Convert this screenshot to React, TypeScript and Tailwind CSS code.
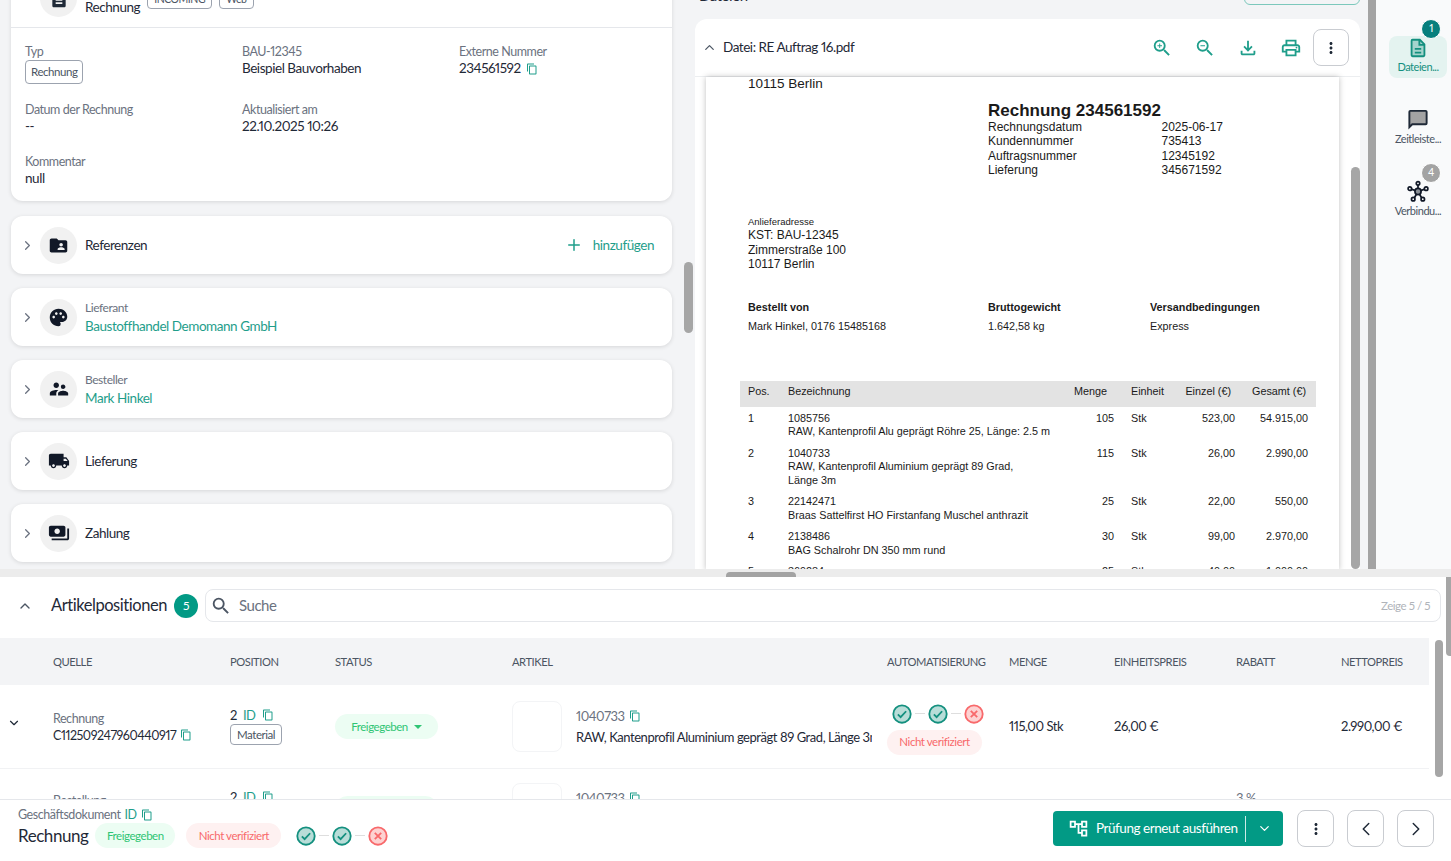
import type { ReactNode } from "react";
import { ChevronDown, ChevronLeft, ChevronRight, ChevronUp, Plus } from "lucide-react";
import {
  MdDescription,
  MdFolderShared,
  MdLocalShipping,
  MdMoreVert,
  MdOutlineAccountTree,
  MdOutlineContentCopy,
  MdOutlineFileDownload,
  MdOutlinePrint,
  MdPalette,
  MdPayments,
  MdSearch,
  MdSupervisorAccount,
  MdZoomIn,
  MdZoomOut,
} from "react-icons/md";

const sans = "font-['Lato','Noto_Sans',sans-serif]";

function Copy({ size = 12 }: { size?: number }) {
  return <MdOutlineContentCopy size={size} className="inline-block shrink-0 text-[#1f9e8b]" />;
}

function CheckCircle() {
  return (
    <svg width="22" height="22" viewBox="0 0 24 24" fill="none" className="text-[#14907f]">
      <circle cx="12" cy="12" r="9.5" fill="currentColor" opacity="0.3" />
      <circle cx="12" cy="12" r="9.5" stroke="currentColor" strokeWidth="2" />
      <path d="M7.5 12.5l3 3 6-6.5" stroke="currentColor" strokeWidth="2" />
    </svg>
  );
}

function CancelCircle() {
  return (
    <svg width="22" height="22" viewBox="0 0 24 24" fill="none" className="text-[#f8696b]">
      <circle cx="12" cy="12" r="9.5" fill="currentColor" opacity="0.3" />
      <circle cx="12" cy="12" r="9.5" stroke="currentColor" strokeWidth="2" />
      <path d="M8.5 8.5l7 7M15.5 8.5l-7 7" stroke="currentColor" strokeWidth="2" />
    </svg>
  );
}

function DocIcon() {
  return (
    <svg width="22" height="22" viewBox="0 0 24 24" fill="none" stroke="currentColor" strokeWidth="2">
      <path d="M14 3H6a1 1 0 0 0-1 1v16a1 1 0 0 0 1 1h12a1 1 0 0 0 1-1V8z" fill="currentColor" fillOpacity="0.3" />
      <path d="M13.5 3v5.5H19M8.5 13h7M8.5 17h7" />
    </svg>
  );
}

function ChatIcon() {
  return (
    <svg width="24" height="24" viewBox="0 0 24 24" fill="none" stroke="#1f2937" strokeWidth="2">
      <path d="M4 3h16a1 1 0 0 1 1 1v12a1 1 0 0 1-1 1H6l-3 3V4a1 1 0 0 1 1-1z" fill="#a3a3a3" />
    </svg>
  );
}

function HubIcon() {
  return (
    <svg width="24" height="24" viewBox="0 0 24 24" fill="none" stroke="#111827" strokeWidth="1.8">
      <path d="M12 12V5M12 12l-7-2.5M12 12l7-2.5M12 12l-4 7M12 12l4 7" />
      <circle cx="12" cy="12" r="3.2" fill="#8a8f96" />
      <circle cx="12" cy="3.5" r="1.8" fill="white" />
      <circle cx="3.5" cy="9" r="1.8" fill="white" />
      <circle cx="20.5" cy="9" r="1.8" fill="white" />
      <circle cx="7" cy="20" r="1.8" fill="white" />
      <circle cx="17" cy="20" r="1.8" fill="white" />
    </svg>
  );
}

function Field({ label, children }: { label: string; children: ReactNode }) {
  return (
    <div className="leading-[17px]">
      <p className="text-[12.5px] text-[#6b7280]">{label}</p>
      <div className="text-[13.5px] text-[#1f2937]">{children}</div>
    </div>
  );
}

function Card({ icon, children, action }: { icon: ReactNode; children: ReactNode; action?: ReactNode }) {
  return (
    <div className="flex h-[58px] items-center rounded-xl bg-white pl-[9px] pr-[18px] shadow-[0_1px_4px_rgba(0,0,0,0.12)]">
      <ChevronRight size={15} className="text-[#6b7280]" />
      <div className="ml-[5px] flex h-[37px] w-[37px] items-center justify-center rounded-full bg-[#f1f1f1] text-[#111827]">
        {icon}
      </div>
      <div className="-mt-[1px] ml-2 flex-1 leading-[18px]">{children}</div>
      {action}
    </div>
  );
}

function Pill({ tone, children, className = "" }: { tone: "green" | "red"; children: ReactNode; className?: string }) {
  const cls = tone === "green" ? "bg-[#ecfdf3] text-[#2fc574]" : "bg-[#fef1f1] text-[#f8696b]";
  return (
    <span className={`inline-flex h-[25px] items-center justify-center rounded-full text-[11.5px] ${cls} ${className}`}>
      {children}
    </span>
  );
}

function Steps({ className }: { className: string }) {
  return (
    <div className={`flex items-center ${className}`}>
      <CheckCircle />
      <span className="mx-[2px] h-px w-[10px] bg-[#dedede]" />
      <CheckCircle />
      <span className="mx-[2px] h-px w-[10px] bg-[#dedede]" />
      <CancelCircle />
    </div>
  );
}

function RailItem({ icon, label, badge, active }: { icon: ReactNode; label: string; badge?: string; active?: boolean }) {
  return (
    <div
      className={`relative flex h-[42px] w-[58px] flex-col items-center justify-center rounded-lg pb-[5px] ${
        active ? "bg-[#e4f3f0] text-[#14907f]" : "text-[#4b5563]"
      }`}
    >
      {badge && (
        <span
          className={`absolute right-[6px] top-[-17px] flex h-5 w-5 items-center justify-center rounded-full border border-white text-[10.5px] text-white ${
            active ? "bg-[#067f7d]" : "bg-[#a3a3a3]"
          }`}
        >
          {badge}
        </span>
      )}
      {icon}
      <span className="mt-[1px] text-[11px] leading-[13px]">{label}</span>
    </div>
  );
}

const invoiceRows = [
  { pos: "1", lines: ["1085756", "RAW, Kantenprofil Alu geprägt Röhre 25, Länge: 2.5 m"], qty: "105", single: "523,00", total: "54.915,00" },
  { pos: "2", lines: ["1040733", "RAW, Kantenprofil Aluminium geprägt 89 Grad,", "Länge 3m"], qty: "115", single: "26,00", total: "2.990,00" },
  { pos: "3", lines: ["22142471", "Braas Sattelfirst HO Firstanfang Muschel anthrazit"], qty: "25", single: "22,00", total: "550,00" },
  { pos: "4", lines: ["2138486", "BAG Schalrohr DN 350 mm rund"], qty: "30", single: "99,00", total: "2.970,00" },
  { pos: "5", lines: ["369284"], qty: "25", single: "40,00", total: "1.000,00" },
];

const invoiceGrid = "grid grid-cols-[40px_286px_40px_17px_33px_71px_73px] px-2";

function PdfPage() {
  return (
    <div className="ml-[11px] h-[493px] w-[633px] overflow-hidden bg-white pl-[34px] font-['Liberation_Sans',Arial,sans-serif] tracking-normal text-[#1a1a1a] shadow-[0_0_6px_rgba(0,0,0,0.25)]">
      <p className="pl-2 text-[13.5px] leading-[14px]">10115 Berlin</p>
      <div className="ml-[248px] mt-[10px]">
        <p className="text-[17px] font-bold leading-[19px]">Rechnung 234561592</p>
        <div className="grid grid-cols-[173.5px_1fr] text-[12px] leading-[14.3px]">
          <span>Rechnungsdatum</span><span>2025-06-17</span>
          <span>Kundennummer</span><span>735413</span>
          <span>Auftragsnummer</span><span>12345192</span>
          <span>Lieferung</span><span>345671592</span>
        </div>
      </div>
      <div className="mt-[39px] pl-2">
        <p className="text-[9.5px] leading-[11px]">Anlieferadresse</p>
        <div className="mt-[1px] text-[12px] leading-[14.5px]">
          <p>KST: BAU-12345</p>
          <p>Zimmerstraße 100</p>
          <p>10117 Berlin</p>
        </div>
      </div>
      <div className="mt-[29px] grid grid-cols-[240px_162px_1fr] pl-2 text-[10.8px] leading-[13px]">
        <b>Bestellt von</b><b>Bruttogewicht</b><b>Versandbedingungen</b>
        <span className="mt-[6px]">Mark Hinkel, 0176 15485168</span>
        <span className="mt-[6px]">1.642,58 kg</span>
        <span className="mt-[6px]">Express</span>
      </div>
      <div className="mt-[48px] w-[576px] text-[10.8px] leading-[13.5px]">
        <div className={`${invoiceGrid} h-[26px] items-center whitespace-nowrap bg-[#e3e3e3] pb-[3px]`}>
          <span>Pos.</span>
          <span>Bezeichnung</span>
          <span>Menge</span>
          <span />
          <span>Einheit</span>
          <span className="pr-[4px] text-right">Einzel (€)</span>
          <span className="pr-[2px] text-right">Gesamt (€)</span>
        </div>
        <div className="flex flex-col gap-2 pt-[5px]">
          {invoiceRows.map((r) => (
            <div key={r.pos} className={invoiceGrid}>
              <span>{r.pos}</span>
              <div>
                {r.lines.map((l) => (
                  <p key={l}>{l}</p>
                ))}
              </div>
              <span className="text-right">{r.qty}</span>
              <span />
              <span>Stk</span>
              <span className="text-right">{r.single}</span>
              <span className="text-right">{r.total}</span>
            </div>
          ))}
        </div>
      </div>
    </div>
  );
}

const colGrid = "grid grid-cols-[53px_177px_105px_177px_375px_122px_105px_122px_105px_88px]";

function ItemRow({ source, rabatt, clipped }: { source: string; rabatt?: string; clipped?: boolean }) {
  return (
    <div className={`${colGrid} h-[84px] items-center border-b border-[#f1f2f4] text-[13px] text-[#1f2937] ${clipped ? "-mt-[2px]" : ""}`}>
      <div className="-mt-[8px] pl-[7px]">
        <ChevronDown size={14} />
      </div>
      <div className="leading-[17px]">
        <p className="text-[12.5px] text-[#6b7280]">{source}</p>
        <p className="flex items-center gap-1 text-[12.5px]">
          C112509247960440917 <Copy />
        </p>
      </div>
      <div className="-mt-[2px]">
        <p className="flex items-center gap-[6px] leading-[18px]">
          2 <span className="text-[#1f9e8b]">ID</span> <Copy />
        </p>
        <span className="inline-flex h-[21px] items-center rounded border border-[#9ca3af] px-[6px] text-[11.5px] text-[#4b5563]">
          Material
        </span>
      </div>
      <div>
        <span className="inline-flex h-[25px] w-[103px] items-center justify-center gap-[6px] rounded-full bg-[#ecfdf3] text-[11.5px] text-[#2fc574]">
          Freigegeben
          <span className="h-0 w-0 border-x-[4px] border-t-[4px] border-x-transparent border-t-[#2fc574]" />
        </span>
      </div>
      <div className="flex min-w-0 items-center gap-[14px] pr-[15px]">
        <div className="h-[51px] w-[50px] shrink-0 rounded-lg border border-[#f3f4f6]" />
        <div className="min-w-0 overflow-hidden leading-[21px]">
          <p className="flex items-center gap-1 text-[#6b7280]">
            1040733 <Copy />
          </p>
          <p className="whitespace-nowrap">RAW, Kantenprofil Aluminium geprägt 89 Grad, Länge 3m</p>
        </div>
      </div>
      <div className="mt-1">
        {!clipped && (
          <>
            <Steps className="mb-[5px] pl-[4px]" />
            <Pill tone="red" className="w-[95px]">Nicht verifiziert</Pill>
          </>
        )}
      </div>
      <div>{!clipped && "115,00 Stk"}</div>
      <div>{!clipped && "26,00 €"}</div>
      <div className="self-start pt-[22px] text-[#6b7280]">{rabatt}</div>
      <div>{!clipped && "2.990,00 €"}</div>
    </div>
  );
}

export default function App() {
  return (
    <div className={`relative flex h-[861px] w-[1451px] flex-col overflow-hidden bg-white tracking-[-0.45px] antialiased proportional-nums ${sans}`}>
      {/* oberer Bereich, Inhalt ist gescrollt */}
      <div className="flex h-[569px] shrink-0 overflow-hidden bg-[#f3f4f6]">
        <div className="relative h-full w-[692px] shrink-0 px-[11px]">
          <div className="w-[661px]">
            <div className="-mt-[30px] rounded-xl bg-white pb-[14px] shadow-[0_1px_4px_rgba(0,0,0,0.12)]">
              <div className="flex h-[58px] items-end border-b border-[#e5e7eb] pb-[10px] pl-[29px]">
                <div className="flex h-[37px] w-[37px] items-center justify-center rounded-full bg-[#f1f1f1]">
                  <MdDescription size={20} className="text-[#1f2937]" />
                </div>
                <span className="ml-2 text-[13.5px] leading-[20px] text-[#1f2937]">Rechnung</span>
                <span className="mb-[8px] ml-[7px] rounded border border-[#9ca3af] px-[6px] text-[10.5px] leading-[18px] text-[#4b5563]">INCOMING</span>
                <span className="mb-[8px] ml-[7px] rounded border border-[#9ca3af] px-[6px] text-[10.5px] leading-[18px] text-[#4b5563]">Web</span>
              </div>
              <div className="grid grid-cols-[217px_217px_1fr] px-[14px] pt-[15px]">
                <div className="h-[58px]">
                  <p className="text-[12.5px] leading-[17px] text-[#6b7280]">Typ</p>
                  <span className="flex h-[24px] w-fit items-center rounded border border-[#9ca3af] px-[5px] text-[11.5px] text-[#4b5563]">Rechnung</span>
                </div>
                <Field label="BAU-12345">Beispiel Bauvorhaben</Field>
                <Field label="Externe Nummer">
                  <span className="flex items-center gap-[5px]">234561592 <Copy /></span>
                </Field>
                <Field label="Datum der Rechnung">--</Field>
                <div className="h-[52px]">
                  <Field label="Aktualisiert am">22.10.2025 10:26</Field>
                </div>
                <div />
                <Field label="Kommentar">null</Field>
              </div>
            </div>
            <div className="mt-[15px] flex flex-col gap-[14px]">
              <Card
                icon={<MdFolderShared size={21} />}
                action={
                  <span className="flex items-center gap-[10px] text-[13.5px] text-[#1f9e8b]">
                    <Plus size={18} /> hinzufügen
                  </span>
                }
              >
                <span className="text-[13.5px] text-[#1f2937]">Referenzen</span>
              </Card>
              <Card icon={<MdPalette size={21} />}>
                <p className="text-[12px] text-[#6b7280]">Lieferant</p>
                <p className="text-[13.5px] text-[#1f9e8b]">Baustoffhandel Demomann GmbH</p>
              </Card>
              <Card icon={<MdSupervisorAccount size={22} />}>
                <p className="text-[12px] text-[#6b7280]">Besteller</p>
                <p className="text-[13.5px] text-[#1f9e8b]">Mark Hinkel</p>
              </Card>
              <Card icon={<MdLocalShipping size={22} />}>
                <span className="text-[13.5px] text-[#1f2937]">Lieferung</span>
              </Card>
              <Card icon={<MdPayments size={22} />}>
                <span className="text-[13.5px] text-[#1f2937]">Zahlung</span>
              </Card>
            </div>
          </div>
          <div className="absolute left-[684px] top-[262px] h-[71px] w-[9px] rounded-full bg-[#a6a6a6]" />
        </div>

        <div className="relative h-full w-[676px] shrink-0 pl-[3px] pr-[8px]">
          <div className="relative z-0 flex h-[19px] items-end justify-between overflow-hidden pb-[14px] pl-[4px]">
            <span className="text-[15px] leading-[20px] text-[#1f2937]">Dateien</span>
            <span className="h-[36px] w-[116px] shrink-0 rounded-md border border-[#7cc8bc]" />
          </div>
          <div className="h-[550px] overflow-hidden rounded-t-xl bg-white">
            <div className="flex h-[58px] items-center border-b border-[#eceef0] pl-[7px] pr-[11px]">
              <ChevronUp size={15} className="text-[#4b5563]" />
              <span className="ml-[6px] flex-1 text-[13.5px] text-[#1f2937]">Datei: RE Auftrag 16.pdf</span>
              <div className="flex items-center gap-[21px] text-[#1f9e8b]">
                <MdZoomIn size={22} />
                <MdZoomOut size={22} />
                <MdOutlineFileDownload size={22} />
                <MdOutlinePrint size={22} />
              </div>
              <span className="ml-[11px] flex h-[37px] w-[36px] items-center justify-center rounded-lg border border-[#c9ccd1] text-[#1f2937]">
                <MdMoreVert size={18} />
              </span>
            </div>
            <PdfPage />
          </div>
          <div className="absolute left-[659px] top-[167px] h-[402px] w-[9px] rounded-full bg-[#a6a6a6]" />
        </div>

        <div className="h-full w-[8px] shrink-0 bg-[#a3a3a3]" />
        <div className="flex h-full flex-1 flex-col items-center gap-[30px] bg-[#f9fafb] pl-[9px] pt-[36px]">
          <RailItem active badge="1" icon={<DocIcon />} label="Dateien..." />
          <RailItem icon={<ChatIcon />} label="Zeitleiste..." />
          <RailItem badge="4" icon={<HubIcon />} label="Verbindu..." />
        </div>
      </div>

      <div className="relative h-[8px] shrink-0 bg-[#ececec]">
        <div className="absolute left-[726px] top-[3px] h-[6px] w-[70px] rounded-t bg-[#a3a3a3]" />
      </div>

      {/* Artikelpositionen */}
      <div className="relative h-[222px] shrink-0 overflow-hidden bg-white">
        <div className="flex h-[61px] items-center pb-[4px] pl-[17px] pr-[10px]">
          <ChevronUp size={16} className="text-[#4b5563]" />
          <span className="ml-[18px] text-[16.5px] text-[#1f2937]">Artikelpositionen</span>
          <span className="ml-[7px] flex h-[24px] w-[24px] items-center justify-center rounded-full bg-[#029a85] text-[12px] text-white">5</span>
          <div className="ml-[7px] flex h-[33px] flex-1 items-center rounded-lg border border-[#e5e7eb] pl-[4px] pr-[10px]">
            <MdSearch size={22} className="text-[#4b5563]" />
            <span className="ml-[7px] flex-1 text-[15px] text-[#6b7280]">Suche</span>
            <span className="text-[11.5px] text-[#b0b4ba]">Zeige 5 / 5</span>
          </div>
        </div>
        <div className="w-[1429px]">
          <div className={`${colGrid} h-[47px] items-center bg-[#f3f4f6] pt-[1px] text-[11.2px] text-[#4b5563]`}>
            <span />
            <span>QUELLE</span>
            <span>POSITION</span>
            <span>STATUS</span>
            <span>ARTIKEL</span>
            <span className="whitespace-nowrap">AUTOMATISIERUNG</span>
            <span>MENGE</span>
            <span>EINHEITSPREIS</span>
            <span>RABATT</span>
            <span>NETTOPREIS</span>
          </div>
          <ItemRow source="Rechnung" />
          <ItemRow source="Bestellung" rabatt="3 %" clipped />
        </div>
        <div className="absolute left-[1435px] top-[63px] h-[137px] w-[8px] rounded-full bg-[#a6a6a6]" />
        <div className="absolute left-[1446px] top-0 h-[79px] w-[5px] rounded-bl bg-[#a6a6a6]" />
      </div>

      {/* Fußleiste */}
      <div className="flex flex-1 items-start justify-between border-t border-[#e5e7eb] bg-white pl-[18px] pr-[17px]">
        <div className="pt-[6px]">
          <p className="flex items-center gap-1 text-[12.5px] leading-[18px] text-[#6b7280]">
            Geschäftsdokument <span className="text-[#1f9e8b]">ID</span> <Copy />
          </p>
          <div className="-mt-[1px] flex items-center">
            <span className="mr-[7px] text-[17px] leading-[25px] text-[#1f2937]">Rechnung</span>
            <Pill tone="green" className="w-[80px]">Freigegeben</Pill>
            <span className="w-[11px]" />
            <Pill tone="red" className="w-[95px]">Nicht verifiziert</Pill>
            <Steps className="ml-[14px]" />
          </div>
        </div>
        <div className="flex items-center pt-[10px]">
          <div className="flex h-[35px] w-[230px] items-center rounded bg-[#029a85] pl-[15px] text-white">
            <MdOutlineAccountTree size={21} />
            <span className="ml-[7px] flex-1 whitespace-nowrap text-[13.5px]">Prüfung erneut ausführen</span>
            <span className="h-[26px] w-px bg-white/80" />
            <ChevronDown size={15} className="mx-[11px]" />
          </div>
          <span className="ml-[14px] flex h-[37px] w-[37px] items-center justify-center rounded-lg border border-[#c9ccd1] text-[#1f2937]">
            <MdMoreVert size={18} />
          </span>
          <span className="ml-[13px] flex h-[37px] w-[37px] items-center justify-center rounded-lg border border-[#c9ccd1] text-[#1f2937]">
            <ChevronLeft size={22} strokeWidth={1.6} />
          </span>
          <span className="ml-[13px] flex h-[37px] w-[37px] items-center justify-center rounded-lg border border-[#c9ccd1] text-[#1f2937]">
            <ChevronRight size={22} strokeWidth={1.6} />
          </span>
        </div>
      </div>
    </div>
  );
}
